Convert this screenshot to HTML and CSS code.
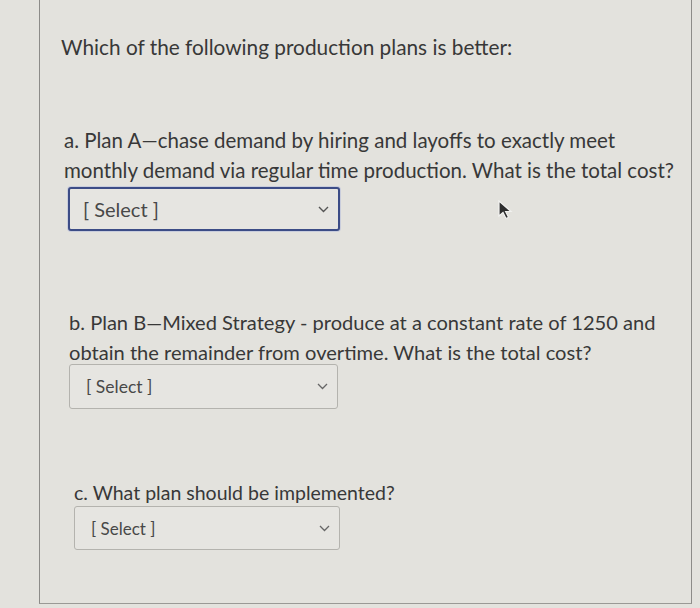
FILE: index.html
```html
<!DOCTYPE html>
<html>
<head>
<meta charset="utf-8">
<link rel="stylesheet" href="styles.css">
</head>
<body>
<div class="card">
  <h1 class="title">Which of the following production plans is better:</h1>

  <div class="question q-a">
    <p class="qtext">a. Plan A—chase demand by hiring and layoffs to exactly meet monthly demand via regular time production. What is the total cost?</p>
    <div class="select select-focus">
      <span class="select-label">[ Select ]</span>
      <svg class="chev" width="11" height="7" viewBox="0 0 11 7"><path d="M1 1 L5.5 5.5 L10 1" fill="none" stroke="#555" stroke-width="1.4"/></svg>
    </div>
  </div>

  <div class="question q-b">
    <p class="qtext">b. Plan B—Mixed Strategy - produce at a constant rate of 1250 and obtain the remainder from overtime. What is the total cost?</p>
    <div class="select">
      <span class="select-label">[ Select ]</span>
      <svg class="chev" width="11" height="7" viewBox="0 0 11 7"><path d="M1 1 L5.5 5.5 L10 1" fill="none" stroke="#666" stroke-width="1.3"/></svg>
    </div>
  </div>

  <div class="question q-c">
    <p class="qtext">c. What plan should be implemented?</p>
    <div class="select">
      <span class="select-label">[ Select ]</span>
      <svg class="chev" width="11" height="7" viewBox="0 0 11 7"><path d="M1 1 L5.5 5.5 L10 1" fill="none" stroke="#666" stroke-width="1.3"/></svg>
    </div>
  </div>

  <svg class="cursor" width="16" height="20" viewBox="0 0 16 20"><path d="M2 1 L2 16 L6 12.5 L9 18.5 L11.5 17.3 L8.6 11.5 L14 11.5 Z" fill="#2e2e2e" stroke="#f2f2f0" stroke-width="1.2"/></svg>
</div>
</body>
</html>
```

FILE: styles.css
```css
html, body {
  margin: 0;
  padding: 0;
  background: #e3e2dd;
}
body {
  font-family: Lato, "Open Sans", sans-serif;
  color: #383838;
  width: 700px;
  height: 608px;
  overflow: hidden;
}
.card {
  position: relative;
  box-sizing: border-box;
  margin: 0 8px 0 39px;
  height: 604px;
  border-left: 1px solid #8c8b88;
  border-right: 1px solid #8c8b88;
  border-bottom: 1px solid #9a9995;
  padding: 33px 0 0 21px;
}
.title {
  margin: 0;
  font-size: 20.8px;
  font-weight: 400;
  line-height: 28px;
}
.question {
  display: flex;
  flex-direction: column;
  align-items: flex-start;
}
.qtext {
  margin: 0;
  font-size: 20px;
  line-height: 30px;
}
.q-a { margin-top: 64px; padding-left: 3px; }
.q-a .qtext { font-size: 20.5px; width: 624px; }
.q-b { margin-top: 76px; padding-left: 8px; }
.q-b .qtext { font-size: 20.1px; width: 600px; }
.q-c { margin-top: 69px; padding-left: 13px; }
.q-c .qtext { font-size: 19.5px; }
.select {
  box-sizing: border-box;
  width: 269px;
  height: 45px;
  border: 1px solid #b4b3ae;
  border-radius: 3px;
  background: #e6e5e1;
  display: flex;
  align-items: center;
  justify-content: space-between;
  padding: 0 9px 0 16px;
}
.select-label {
  font-size: 17.5px;
  color: #484848;
}
.q-a .select {
  margin-top: 2px;
  margin-left: 4px;
  width: 272px;
  height: 44px;
  border: 2px solid #3c4c86;
  box-shadow: 0 0 0 1px #c9cddc;
  padding-left: 13px;
}
.q-a .select-label { font-size: 20px; }
.q-b .select { margin-top: -3px; }
.q-c .select { margin-top: -2px; width: 266px; height: 44px; }
.q-c .select-label { font-size: 17px; }
.cursor {
  position: absolute;
  left: 457px;
  top: 200px;
}
```
